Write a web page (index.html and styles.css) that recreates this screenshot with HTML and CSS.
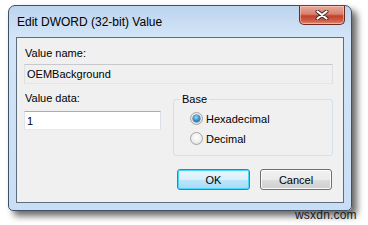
FILE: index.html
```html
<!DOCTYPE html>
<html lang="en">
<head>
  <meta charset="UTF-8">
  <meta name="viewport" content="width=device-width, initial-scale=1.0">
  <title>Edit DWORD (32-bit) Value</title>
  <link rel="stylesheet" href="styles.css">
</head>
<body>
  <div class="window">
    <div class="titlebar">
      <span class="title">Edit DWORD (32-bit) Value</span>
      <button class="close" title="Close">
        <svg width="14" height="10" viewBox="0 0 14 10">
          <path d="M2.5 1.5 L11.5 8.5 M11.5 1.5 L2.5 8.5" stroke="#3b2a28" stroke-width="4" stroke-linecap="round"/>
          <path d="M2.5 1.5 L11.5 8.5 M11.5 1.5 L2.5 8.5" stroke="#ffffff" stroke-width="2.2" stroke-linecap="round"/>
        </svg>
      </button>
    </div>
    <div class="client">
      <label class="lbl" for="vname">Value name:</label>
      <input class="field readonly" id="vname" type="text" value="OEMBackground" readonly>

      <div class="row">
        <div class="data-col">
          <label class="lbl" for="vdata">Value data:</label>
          <input class="field" id="vdata" type="text" value="1">
        </div>
        <fieldset class="group">
          <legend>Base</legend>
          <label class="opt"><input type="radio" name="base" checked> Hexadecimal</label>
          <label class="opt"><input type="radio" name="base"> Decimal</label>
        </fieldset>
      </div>

      <div class="buttons">
        <button class="btn default">OK</button>
        <button class="btn">Cancel</button>
      </div>
    </div>
  </div>
  <div class="watermark">wsxdn.com</div>
</body>
</html>
```

FILE: styles.css
```css
* {
  box-sizing: border-box;
}
body {
  margin: 0;
  width: 368px;
  height: 225px;
  position: relative;
  overflow: hidden;
  background-color: #fff;
  font-family: "Liberation Sans", Arial, sans-serif;
  font-size: 11px;
  color: #000;
}
.window {
  margin: 5px 0 0 8px;
  width: 344px;
  height: 206px;
  border: 1px solid #3f5164;
  border-radius: 7px 7px 5px 5px;
  background: linear-gradient(to bottom, #bcd4ee 0px, #d3e4f7 30px, #c9def5 100%);
  padding: 0 7px 7px 7px;
  box-shadow: 5px 5px 7px rgba(0, 0, 0, 0.6);
}
.titlebar {
  height: 31px;
  display: flex;
  align-items: center;
}
.title {
  padding-left: 1px;
  font-size: 12px;
  color: #000;
}
.close {
  margin-left: auto;
  margin-right: -1px;
  align-self: flex-start;
  width: 46px;
  height: 19px;
  padding: 0;
  border: 1px solid #6e2a22;
  border-top: none;
  border-radius: 0 0 5px 5px;
  background: linear-gradient(to bottom, #e9a99b 0%, #d9806e 45%, #c2402c 55%, #d0634d 85%, #e0907c 100%);
  box-shadow: inset 0 0 0 1px rgba(255, 220, 210, 0.5);
  display: flex;
  align-items: center;
  justify-content: center;
}
.close svg {
  display: block;
}
.client {
  height: 166px;
  border: 1px solid #5c6d7e;
  background-color: #f0f0f0;
  padding: 9px 10px 0 7px;
}
.lbl {
  display: block;
  line-height: 13px;
  padding-left: 1px;
}
.field {
  display: block;
  width: 100%;
  height: 20px;
  margin: 4px 0 0;
  padding: 0 2px;
  font-family: inherit;
  font-size: 11px;
  color: #000;
  background-color: #fff;
  border: 1px solid;
  border-color: #abadb3 #dbdfe6 #e3e9ef #e2e3ea;
  outline: none;
}
.field.readonly {
  background-color: #f0f0f0;
  border-color: #c8c9cc #dddfe3 #e3e5e9 #dddfe3;
}
.row {
  display: flex;
  align-items: flex-start;
  gap: 12px;
  margin-top: 8px;
}
.data-col {
  width: 138px;
}
.data-col .field {
  height: 19px;
  margin-top: 6px;
}
.group {
  width: 161px;
  height: 63px;
  margin: 1px 0 0;
  padding: 6px 0 0 16px;
  border: 1px solid #d5dfe5;
  border-radius: 3px;
  display: flex;
  flex-direction: column;
  gap: 7px;
}
.group legend {
  margin-left: -10px;
  padding: 0 2px;
  line-height: 13px;
}
.opt {
  display: flex;
  align-items: center;
  gap: 3px;
  height: 13px;
}
.opt input {
  appearance: none;
  -webkit-appearance: none;
  margin: 0;
  width: 13px;
  height: 13px;
  border-radius: 50%;
  border: 1px solid #a3a3a3;
  background: radial-gradient(circle at 50% 40%, #ffffff 0%, #f2f2f2 45%, #d6d6d6 100%);
  position: relative;
}
.opt input:checked::after {
  content: "";
  position: absolute;
  left: 2px;
  top: 2px;
  width: 7px;
  height: 7px;
  border-radius: 50%;
  background: radial-gradient(circle at 45% 35%, #9fe0ff 0%, #3c98d0 45%, #0d4a7a 100%);
  box-shadow: 0 0 0 0.5px #2a5a80;
}
.buttons {
  display: flex;
  justify-content: flex-end;
  gap: 10px;
  margin-top: 13px;
  padding-right: 1px;
}
.btn {
  width: 72px;
  height: 21px;
  padding: 0;
  font-family: inherit;
  font-size: 11px;
  color: #000;
  border: 1px solid #707070;
  border-radius: 3px;
  background: linear-gradient(to bottom, #f2f2f2 0%, #ebebeb 50%, #dddddd 51%, #cfcfcf 100%);
  box-shadow: inset 0 0 0 1px #fbfbfb;
}
.btn.default {
  width: 73px;
  border-color: #3c7fb1;
  background: linear-gradient(to bottom, #eaf6fd 0%, #d9f0fc 50%, #bee6fd 51%, #a7d9f5 100%);
  box-shadow: inset 0 0 0 1px #48d8fb;
}
.watermark {
  position: absolute;
  left: 295px;
  top: 208px;
  font-size: 12px;
  line-height: 14px;
  color: #1a1a1a;
  letter-spacing: 0.2px;
}
```
